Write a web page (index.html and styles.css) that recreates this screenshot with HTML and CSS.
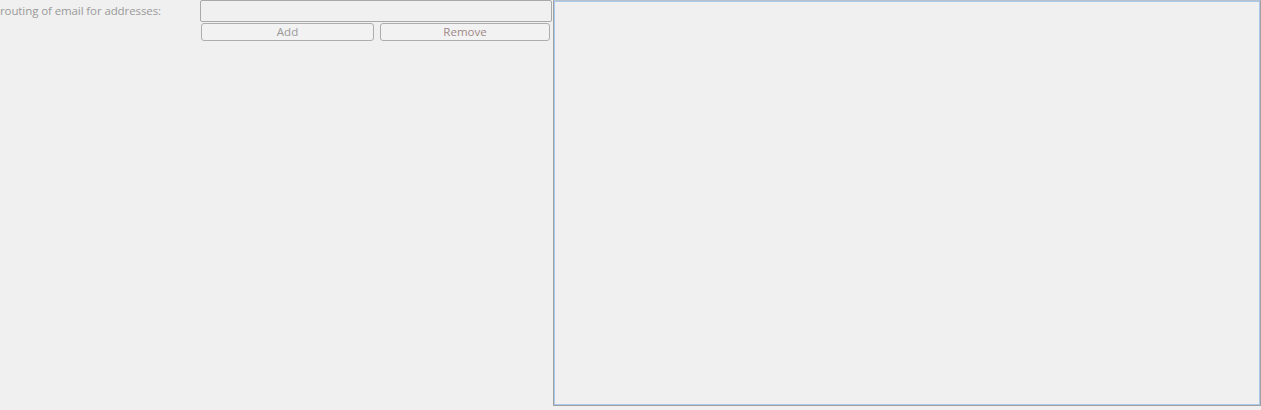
FILE: index.html
```html
<!DOCTYPE html>
<html lang="en">
<head>
  <meta charset="UTF-8" />
  <title>Routing</title>
  <link rel="stylesheet" href="styles.css">
</head>
<body>
  <div class="layout">
    <div class="left">
      <div class="row">
        <label class="label">routing of email for addresses:</label>
        <div class="form">
          <input type="text" class="field" />
          <div class="buttons">
            <button class="btn add">Add</button>
            <button class="btn remove">Remove</button>
          </div>
        </div>
      </div>
    </div>
    <div class="panel"></div>
  </div>
</body>
</html>
```

FILE: styles.css
```css
* {
  margin: 0;
  padding: 0;
  box-sizing: border-box;
}
html, body {
  height: 100%;
}
body {
  background: #f0f0f0;
  font-family: 'Open Sans', sans-serif;
  font-size: 11.5px;
  color: #999;
  overflow: hidden;
}
.layout {
  display: flex;
  height: 406px;
}
.left {
  width: 553px;
  flex: none;
}
.row {
  display: flex;
}
.label {
  width: 200px;
  padding-top: 3px;
  letter-spacing: -0.1px;
  white-space: nowrap;
  color: #9a9a9a;
}
.form {
  width: 352px;
  display: flex;
  flex-direction: column;
}
.field {
  height: 22px;
  width: 352px;
  border: 1px solid #a9a9a9;
  border-radius: 2px;
  background: #f0f0f0;
  outline: none;
}
.buttons {
  display: flex;
  gap: 6px;
  margin-top: 1px;
  padding-left: 1px;
}
.btn {
  height: 18px;
  font-family: 'Open Sans', sans-serif;
  font-size: 11.5px;
  color: #999;
  background: #f2f2f2;
  border: 1px solid #adadad;
  border-radius: 3px;
  line-height: 16px;
}
.add {
  width: 173px;
}
.remove {
  width: 170px;
  color: #a08888;
}
.panel {
  width: 708px;
  flex: none;
  border: 1px solid #a0a0a0;
  border-top-color: #b8c0cc;
  box-shadow: inset 1px 1px 0 #a8c8ec, inset -1px -1px 0 #a8c8ec;
}
```
